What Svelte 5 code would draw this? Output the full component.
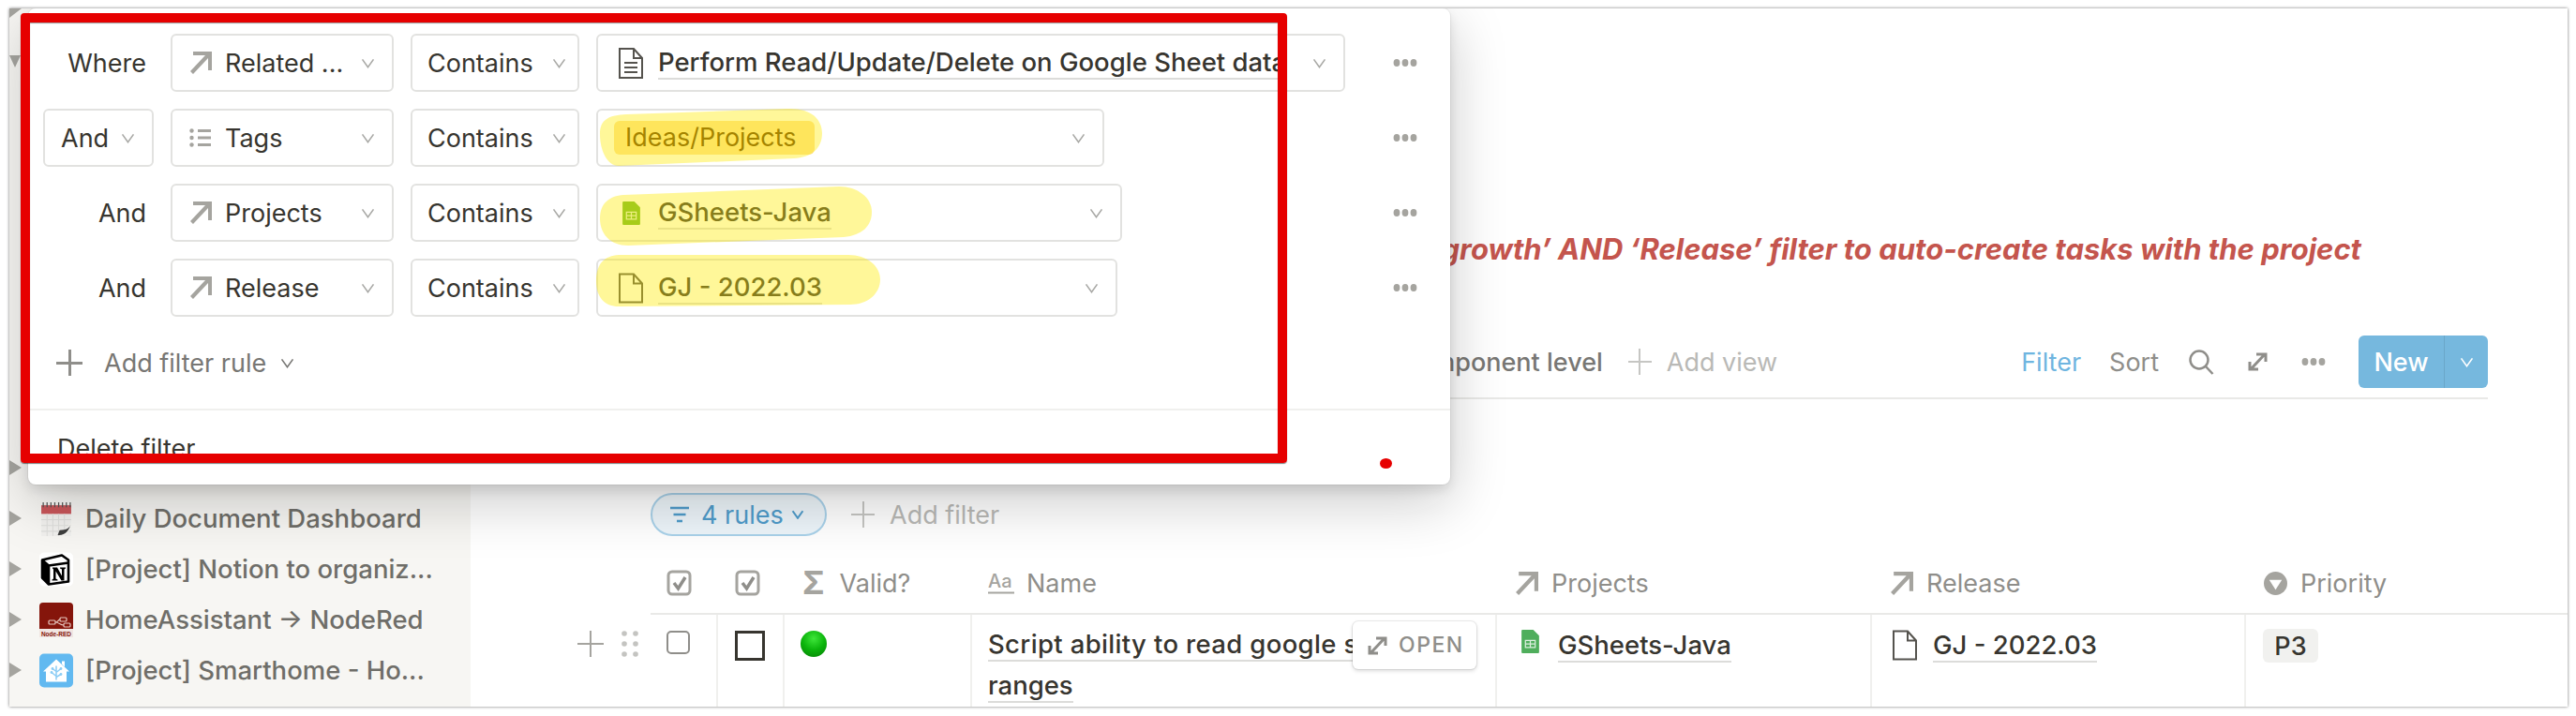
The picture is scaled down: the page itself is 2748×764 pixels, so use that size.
<script>
  const rules = [
    { conj: 'Where', prop: 'Related ...', icon: 'arrow', kind: 'page', value: 'Perform Read/Update/Delete on Google Sheet data', width: 799 },
    { conj: 'And', prop: 'Tags', icon: 'list', kind: 'tag', value: 'Ideas/Projects', width: 542, picker: true },
    { conj: 'And', prop: 'Projects', icon: 'arrow', kind: 'sheet', value: 'GSheets-Java', width: 561 },
    { conj: 'And', prop: 'Release', icon: 'arrow', kind: 'doc', value: 'GJ - 2022.03', width: 556 }
  ];

  const pages = [
    { name: '', icon: '' },
    { name: 'Daily Document Dashboard', icon: 'calendar' },
    { name: '[Project] Notion to organiz...', icon: 'notion' },
    { name: 'HomeAssistant → NodeRed', icon: 'nodered' },
    { name: '[Project] Smarthome - Ho...', icon: 'home' }
  ];
</script>

{#snippet chevron()}
  <svg class="chev" viewBox="0 0 16 12"><path d="M1.5 1.5 8 10.5 14.5 1.5" /></svg>
{/snippet}

{#snippet arrow()}
  <svg class="arrow" viewBox="0 0 24 24"><path d="M4 0h20v20h-4V7L4 24 1 21 17 4H4z" /></svg>
{/snippet}

{#snippet dots()}
  <svg class="dots" viewBox="0 0 26 10"><ellipse cx="4" cy="5" rx="3.400" ry="4" /><ellipse cx="13" cy="5" rx="3.400" ry="4" /><ellipse cx="22" cy="5" rx="3.400" ry="4" /></svg>
{/snippet}

{#snippet sheet()}
  <svg class="sheet" viewBox="0 0 18 24">
    <path d="M1 0h11l6 6v17a1 1 0 0 1-1 1H1a1 1 0 0 1-1-1V1a1 1 0 0 1 1-1z" fill="currentColor" />
    <path d="M4 11h10v7H4zM9 11v7M4 14.500h10" fill="none" stroke="#fff" stroke-width="1.200" opacity=".8" />
  </svg>
{/snippet}

{#snippet blankdoc()}
  <svg class="doc" viewBox="0 0 26 32"><path d="M1 1h15l9 10v20H1zM16 1v10h9" fill="none" stroke="currentColor" stroke-width="2" /></svg>
{/snippet}

{#snippet expand()}
  <svg class="expand" viewBox="0 0 21 20"><path d="M3 18 18 2M9 2h10v8M2 10v8h9" /></svg>
{/snippet}

<div class="screen">
  <div class="window">
    <aside class="sidebar">
      <div class="stubs">
        <span class="tri corner"></span>
        <span class="tri down"></span>
      </div>
      <ul class="pages">
        {#each pages as page}
          <li>
            <span class="tri"></span>
            <span class="pageicon">
              {#if page.icon === 'calendar'}
                <svg viewBox="0 0 33 36">
                  <rect x="1" y="3" width="31" height="33" fill="#f1f0ee" />
                  <rect x="1" y="4" width="31" height="9" fill="#c9565a" />
                  <path d="M3 1v5M7 1v5M11 1v5M15 1v5M19 1v5M23 1v5M27 1v5M31 1v5" stroke="#555" stroke-width="1.200" />
                  <path d="M1 19h31M1 25h31M1 31h31M7 13v23M13 13v23M19 13v23M25 13v23" stroke="#dededc" stroke-width="1" />
                  <path d="M32 22 20 36h5l7-8z" fill="#f7f6f3" />
                  <path d="M32 22c-1 6-5 8-12 8l-2 5c7 1 12-4 14-13z" fill="#3e3e3e" />
                </svg>
              {:else if page.icon === 'notion'}
                <svg viewBox="0 0 36 36">
                  <rect width="36" height="36" rx="5" fill="#fff" />
                  <path d="M3 8 24 3l7 5v23l-21 3-7-7z" fill="#fff" stroke="#000" stroke-width="2.600" stroke-linejoin="round" />
                  <path d="M3 8l7 6v20M10 14l21-3" fill="none" stroke="#000" stroke-width="2.600" />
                  <path d="M3 9l7 5v19l-7-6z" fill="#000" />
                  <path d="M14 16h5l5 9v-7l-2-1v-1h6v1l-1.500 1v12h-3l-6-10v8l2 1v1h-6v-1l1.500-1V18l-1-1z" fill="#000" />
                </svg>
              {:else if page.icon === 'nodered'}
                <svg viewBox="0 0 36 37">
                  <path d="M0 4a4 4 0 0 1 4-4h28a4 4 0 0 1 4 4v24H0z" fill="#85150b" />
                  <rect y="28" width="36" height="9" fill="#f1e6e2" />
                  <g fill="none" stroke="#e8c9c2" stroke-width="1.200">
                    <rect x="10" y="19" width="7" height="4" rx="1" />
                    <rect x="22" y="16" width="7" height="4" rx="1" />
                    <rect x="26" y="22" width="7" height="4" rx="1" />
                    <path d="M17 21c3 0 3-3 5-3M17 21c4 0 5 3 9 3" />
                  </g>
                  <text x="18" y="35.500" class="nrtext">Node-RED</text>
                </svg>
              {:else if page.icon === 'home'}
                <svg viewBox="0 0 36 36">
                  <rect width="36" height="36" rx="5" fill="#62b9f0" />
                  <path d="M18 6 32 19h-3v11H7V19H4zM24 8h3v6l-3-3z" fill="#fff" />
                  <path d="M18 28V13M18 24l-5-4M18 20l5-4M18 25l5-3M14 16l4 3" stroke="#8ccdf5" stroke-width="1.500" fill="none" />
                  <circle cx="13" cy="20" r="1.400" fill="#8ccdf5" /><circle cx="23" cy="16" r="1.400" fill="#8ccdf5" /><circle cx="23" cy="22" r="1.400" fill="#8ccdf5" /><circle cx="14" cy="16" r="1.400" fill="#8ccdf5" />
                </svg>
              {/if}
            </span>
            <span class="pagename">{page.name}</span>
          </li>
        {/each}
      </ul>
    </aside>

    <main class="main">
      <p class="note">‘growth’ AND ‘Release’ filter to auto-create tasks with the project</p>

      <div class="toolbar">
        <div class="views">
          <span class="view">Component level</span>
          <span class="addview"><span class="plus small"></span>Add view</span>
        </div>
        <div class="tools">
          <span class="filter">Filter</span>
          <span class="sort">Sort</span>
          <svg class="search" viewBox="0 0 28 28"><circle cx="12" cy="12" r="9.500" /><path d="M19 19l7.500 8" /></svg>
          <span class="toolexpand">{@render expand()}</span>
          <span class="tooldots">{@render dots()}</span>
          <div class="newbtn">
            <span class="newlabel">New</span>
            <span class="newchev">{@render chevron()}</span>
          </div>
        </div>
      </div>

      <div class="filterbar">
        <span class="pill">
          <svg viewBox="0 0 22 20"><path d="M1 3h20M4.500 10h13M8 17h6" /></svg>
          4 rules
          <svg class="pillchev" viewBox="0 0 16 12"><path d="M1.500 1.500 8 10.500 14.500 1.500" /></svg>
        </span>
        <span class="addfilter"><span class="plus small"></span>Add filter</span>
      </div>

      <div class="table">
        <div class="th"><svg class="hcheck" viewBox="0 0 27 28"><rect x="2" y="2" width="23" height="24" rx="4" /><path class="tick" d="M8 14l4.500 6L20 8" /></svg></div>
        <div class="th"><svg class="hcheck" viewBox="0 0 27 28"><rect x="2" y="2" width="23" height="24" rx="4" /><path class="tick" d="M8 14l4.500 6L20 8" /></svg></div>
        <div class="th valid"><span class="sigma">Σ</span>Valid?</div>
        <div class="th name">
          <svg class="aa" viewBox="0 0 28 24"><text x="0" y="17" class="aatext">Aa</text><path d="M0 22.500h28" /></svg>Name
        </div>
        <div class="th proj">{@render arrow()}Projects</div>
        <div class="th rel">{@render arrow()}Release</div>
        <div class="th prio">
          <svg class="prioicon" viewBox="0 0 26 26"><circle cx="13" cy="13" r="13" /><path d="M6 9h14l-7 11z" fill="#fff" /></svg>Priority
        </div>

        <div class="td first">
          <div class="handles">
            <span class="plus"></span>
            <svg class="grip" viewBox="0 0 18 28">
              {#each [3, 14, 25] as cy}
                <circle cx="3" {cy} r="2.800" /><circle cx="15" {cy} r="2.800" />
              {/each}
            </svg>
          </div>
          <span class="rowcheck"></span>
        </div>
        <div class="td second"><span class="blackbox"></span></div>
        <div class="td"><span class="greendot"></span></div>
        <div class="td namecell">
          <span class="link">Script ability to read google sheet</span><br /><span class="link">ranges</span>
          <span class="open">
            {@render expand()}
            OPEN
          </span>
        </div>
        <div class="td projcell"><span class="greensheet">{@render sheet()}</span><span class="link">GSheets-Java</span></div>
        <div class="td relcell">{@render blankdoc()}<span class="link">GJ - 2022.03</span></div>
        <div class="td priocell"><span class="p3">P3</span></div>
      </div>
    </main>

    <section class="popup">
      {#each rules as rule, i}
        <div class="rule">
          {#if i === 1}
            <div class="select conj"><span>And</span>{@render chevron()}</div>
          {:else}
            <div class="conjlabel">{rule.conj}</div>
          {/if}
          <div class="select prop">
            {#if rule.icon === 'arrow'}
              {@render arrow()}
            {:else}
              <svg class="listicon" viewBox="0 0 24 20"><path d="M9 2.500h14M9 10h14M9 17.500h14" /><circle cx="2.500" cy="2.500" r="2.200" /><circle cx="2.500" cy="10" r="2.200" /><circle cx="2.500" cy="17.500" r="2.200" /></svg>
            {/if}
            <span>{rule.prop}</span>
            {@render chevron()}
          </div>
          <div class="select op"><span>Contains</span>{@render chevron()}</div>
          <div class="select val" style:width="{rule.width}px">
            {#if rule.kind === 'tag'}
              <span class="tag">{rule.value}</span>
            {:else}
              <span class="valicon">
                {#if rule.kind === 'page'}
                  <svg class="doc" viewBox="0 0 26 33"><path d="M1 1h15l9 10v21H1zM16 1v10h9M6 16h14M6 21h14M6 26h14" fill="none" stroke="currentColor" stroke-width="2" /></svg>
                {:else if rule.kind === 'sheet'}
                  <span class="limegreen">{@render sheet()}</span>
                {:else}
                  {@render blankdoc()}
                {/if}
              </span>
              <span class="link clip">{rule.value}</span>
            {/if}
            {@render chevron()}
          </div>
          <div class="more">{@render dots()}</div>
        </div>
      {/each}

      <div class="addrule">
        <span class="plus"></span>
        <span>Add filter rule</span>
        {@render chevron()}
      </div>
      <div class="deletefilter">Delete filter</div>
    </section>

    <!-- marker strokes drawn over the screenshot -->
    <svg class="marker" viewBox="0 0 2729 745" aria-hidden="true">
      <path d="M630 134C630 118 640 114 658 113L830 107C855 106 867 118 867 133C867 150 855 159 837 160L650 168C638 168 630 152 630 134z" />
      <path d="M630 224C630 208 640 200 655 199L885 190C905 190 920 202 920 217C920 232 910 242 890 244L660 253C640 253 630 240 630 224z" />
      <path d="M626 291C626 272 635 264 650 263L895 263C915 263 929 275 929 289C929 305 915 316 897 316L650 318C635 318 626 308 626 291z" />
    </svg>
    <div class="redbox"></div>
    <span class="reddot"></span>
  </div>
</div>

<style>
  :global(body) {
    margin: 0;
    background: #fff;
  }

  .screen {
    width: 2748px;
    height: 764px;
    box-sizing: border-box;
    padding: 9px 9px 10px 10px;
    font-family: Inter, "Noto Sans", sans-serif;
    font-size: 27px;
    color: #37352f;
  }

  .window {
    position: relative;
    display: flex;
    height: 100%;
    overflow: hidden;
    background: #fff;
    box-shadow: 0 0 3px rgba(0, 0, 0, 0.55);
  }

  .sidebar {
    flex: 0 0 492px;
    display: flex;
    flex-direction: column;
    justify-content: space-between;
    background: #f7f6f3;
  }

  .stubs {
    display: flex;
    flex-direction: column;
    gap: 40px;
  }

  .tri {
    display: block;
    flex: none;
    width: 0;
    height: 0;
    border-style: solid;
    border-width: 8px 0 8px 13px;
    border-color: transparent transparent transparent #a5a49f;
  }

  .tri.corner {
    border-width: 10px 13px 0 0;
    border-color: #a5a49f transparent transparent transparent;
  }

  .tri.down {
    border-width: 13px 6px 0 6px;
    border-color: #a5a49f transparent transparent transparent;
  }

  .pages {
    list-style: none;
    margin: 0 0 12px;
    padding: 0;
  }

  .pages li {
    display: flex;
    align-items: center;
    height: 54px;
    font-size: 27.500px;
    font-weight: 500;
    color: #6f6e69;
    white-space: nowrap;
  }

  .pageicon {
    flex: none;
    width: 36px;
    height: 37px;
    margin: 0 13px 0 19px;
  }

  .pageicon svg {
    display: block;
    width: 36px;
    height: 37px;
  }

  .nrtext {
    font: 700 6.500px "Liberation Sans", sans-serif;
    fill: #85150b;
    text-anchor: middle;
  }

  .main {
    flex: 1;
    min-width: 0;
    box-sizing: border-box;
    padding: 237px 85px 0 192px;
    display: flex;
    flex-direction: column;
  }

  .note {
    margin: 0;
    height: 40px;
    line-height: 40px;
    padding-right: 135px;
    font-size: 31px;
    font-weight: 700;
    font-style: italic;
    color: #c4554d;
    text-align: right;
    white-space: nowrap;
    direction: rtl;
    unicode-bidi: plaintext;
  }

  .toolbar {
    display: flex;
    align-items: center;
    justify-content: space-between;
    margin-top: 64px;
    height: 76px;
    box-sizing: border-box;
    padding: 8px 0 10px;
    border-bottom: 2px solid #e9e9e7;
  }

  .views {
    flex: 1;
    display: flex;
    align-items: center;
    justify-content: flex-end;
    gap: 27px;
    padding-right: 260px;
    white-space: nowrap;
  }

  .view {
    font-weight: 500;
    color: #787774;
  }

  .addview,
  .addfilter {
    display: flex;
    align-items: center;
    gap: 16px;
    color: #b9b9b6;
  }

  .tools {
    display: flex;
    align-items: center;
    color: #8f8e8a;
  }

  .filter {
    color: #6fb5e0;
  }

  .sort {
    margin-left: 30px;
  }

  .search {
    width: 28px;
    height: 28px;
    margin-left: 31px;
    fill: none;
    stroke: #8f8e8a;
    stroke-width: 2.500;
  }

  .toolexpand {
    display: flex;
    margin-left: 36px;
  }

  .expand {
    flex: none;
    width: 21px;
    height: 20px;
    fill: none;
    stroke: #8f8e8a;
    stroke-width: 3;
  }

  .tooldots {
    display: flex;
    margin-left: 36px;
  }

  .newbtn {
    display: flex;
    align-items: stretch;
    height: 56px;
    width: 138px;
    margin-left: 35px;
    border-radius: 6px;
    background: #76b8de;
    color: #fff;
    font-weight: 500;
  }

  .newlabel {
    width: 91px;
    display: flex;
    align-items: center;
    justify-content: center;
    border-right: 1px solid #6aa6c9;
  }

  .newchev {
    flex: 1;
    display: flex;
    align-items: center;
    justify-content: center;
  }

  .newchev .chev {
    stroke: #fff;
  }

  .filterbar {
    display: flex;
    align-items: center;
    height: 46px;
    margin-top: 100px;
  }

  .pill {
    display: flex;
    align-items: center;
    gap: 12px;
    width: 188px;
    height: 46px;
    box-sizing: border-box;
    padding: 0 16px 0 18px;
    border: 2px solid #a9d2ea;
    border-radius: 24px;
    background: #edf5fa;
    color: #4f9ccb;
    white-space: nowrap;
  }

  .pill svg {
    flex: none;
    width: 22px;
    height: 20px;
    fill: none;
    stroke: #4f9ccb;
    stroke-width: 2.500;
  }

  .pill .pillchev {
    width: 14px;
    height: 10px;
    margin-left: -4px;
  }

  .addfilter {
    margin-left: 26px;
  }

  .table {
    display: grid;
    grid-template-columns: 72px 71px 200px 560px 400px 399px 1fr;
    grid-template-rows: 66px 98px;
    margin-top: 18px;
    margin-right: -85px;
  }

  .th {
    display: flex;
    align-items: center;
    border-bottom: 2px solid #e9e9e7;
    color: #8f8e8a;
    box-sizing: border-box;
  }

  .th:nth-child(1) {
    padding-left: 17px;
  }

  .th:nth-child(2) {
    padding-left: 18px;
  }

  .hcheck {
    width: 27px;
    height: 28px;
    fill: none;
    stroke: #a5a49f;
    stroke-width: 3;
  }

  .hcheck .tick {
    stroke: #8f8e8a;
    stroke-width: 3.500;
  }

  .valid {
    padding-left: 19px;
    gap: 16px;
  }

  .sigma {
    font-size: 34px;
    font-weight: 700;
    color: #a5a49f;
    line-height: 1;
  }

  .name {
    padding-left: 17px;
    gap: 13px;
  }

  .aa {
    width: 28px;
    height: 24px;
    stroke: #a5a49f;
    stroke-width: 2;
  }

  .aatext {
    font: 500 20px Inter, sans-serif;
    fill: #a5a49f;
    stroke: none;
  }

  .proj,
  .rel {
    padding-left: 19px;
    gap: 14px;
  }

  .prio {
    padding-left: 19px;
    gap: 14px;
  }

  .prioicon {
    width: 25px;
    height: 25px;
    fill: #a5a49f;
  }

  .td {
    position: relative;
    box-sizing: border-box;
    padding-top: 17px;
    border-right: 2px solid #f0f0ee;
  }

  .td:last-child {
    border-right: 0;
  }

  .first {
    padding-left: 17px;
  }

  .handles {
    position: absolute;
    left: -78px;
    top: 17px;
    display: flex;
    align-items: center;
    gap: 19px;
  }

  .grip {
    width: 18px;
    height: 28px;
    fill: #c4c4c1;
  }

  .rowcheck {
    display: block;
    width: 25px;
    height: 25px;
    box-sizing: border-box;
    border: 2px solid #8f8e8a;
    border-radius: 5px;
  }

  .second {
    padding-left: 18px;
  }

  .blackbox {
    display: block;
    width: 32px;
    height: 32px;
    box-sizing: border-box;
    border: 3px solid #37352f;
  }

  .greendot {
    display: block;
    width: 28px;
    height: 28px;
    margin-left: 17px;
    border-radius: 50%;
    background: radial-gradient(circle at 50% 30%, #3ee63a 0%, #0bb40b 50%, #067d06 100%);
  }

  .namecell {
    padding-left: 17px;
    padding-top: 10px;
    line-height: 44px;
    font-weight: 500;
    white-space: nowrap;
    overflow: hidden;
  }

  .link {
    border-bottom: 2px solid #dcdcda;
    font-size: 27.500px;
    font-weight: 500;
    line-height: 1.200;
    white-space: nowrap;
  }

  .namecell .link:first-child {
    letter-spacing: 0.350px;
  }

  .open {
    position: absolute;
    left: 406px;
    top: 7px;
    display: flex;
    align-items: center;
    gap: 12px;
    width: 132px;
    height: 51px;
    box-sizing: border-box;
    padding-left: 16px;
    border-radius: 6px;
    background: #fff;
    box-shadow: 0 0 0 1px rgba(15, 15, 15, 0.08), 0 2px 4px rgba(15, 15, 15, 0.15);
    font-size: 23px;
    letter-spacing: 1.500px;
    line-height: 1;
    font-weight: 500;
    color: #8f8e8a;
  }

  .projcell,
  .relcell {
    display: flex;
    align-items: flex-start;
    gap: 20px;
    padding-left: 26px;
    padding-top: 16px;
  }

  .relcell {
    padding-left: 22px;
    gap: 17px;
  }

  .greensheet {
    color: #4fae5c;
    display: flex;
  }

  .limegreen {
    color: #6db82a;
    display: flex;
  }

  .sheet {
    width: 19px;
    height: 25px;
  }

  .doc {
    width: 26px;
    height: 33px;
    color: #55534e;
  }

  .priocell {
    padding-left: 18px;
    padding-top: 15px;
  }

  .p3 {
    display: inline-flex;
    align-items: center;
    justify-content: center;
    width: 59px;
    height: 36px;
    border-radius: 6px;
    background: #f1f1ef;
    font-weight: 500;
  }

  .popup {
    position: absolute;
    left: 20px;
    top: 0;
    width: 1517px;
    height: 508px;
    box-sizing: border-box;
    padding-top: 27px;
    background: #fff;
    border-radius: 8px;
    box-shadow: 0 0 0 1px rgba(15, 15, 15, 0.05), 0 6px 12px rgba(15, 15, 15, 0.1), 0 18px 60px rgba(15, 15, 15, 0.22);
    display: flex;
    flex-direction: column;
    gap: 18px;
    overflow: hidden;
  }

  .rule {
    display: flex;
    align-items: center;
    gap: 18px;
    height: 62px;
    padding: 0 35px 0 16px;
  }

  .conjlabel {
    width: 110px;
    padding-right: 8px;
    text-align: right;
    font-weight: 400;
  }

  .select {
    display: flex;
    align-items: center;
    height: 62px;
    box-sizing: border-box;
    border: 2px solid #e2e2e0;
    border-radius: 6px;
    white-space: nowrap;
  }

  .select .chev {
    margin-left: auto;
  }

  .conj {
    width: 118px;
    padding: 0 18px 0 17px;
  }

  .prop {
    width: 238px;
    padding: 0 18px 0 18px;
    gap: 14px;
  }

  .op {
    width: 180px;
    padding: 0 12px 0 16px;
  }

  .val {
    padding: 0 18px 0 20px;
  }

  .chev {
    flex: none;
    width: 15px;
    height: 11px;
    fill: none;
    stroke: #a9a9a6;
    stroke-width: 1.800;
  }

  .arrow {
    flex: none;
    width: 24px;
    height: 24px;
    fill: #a5a49f;
  }

  .th .arrow {
    width: 25px;
    height: 25px;
  }

  .listicon {
    flex: none;
    width: 24px;
    height: 20px;
    fill: #a5a49f;
    stroke: #a5a49f;
    stroke-width: 3;
  }

  .listicon circle {
    stroke: none;
  }

  .valicon {
    flex: none;
    display: flex;
    justify-content: center;
    width: 30px;
    margin-right: 14px;
  }

  .clip {
    max-width: 700px;
    overflow: hidden;
    line-height: 1.200;
  }

  .tag {
    margin-left: -3px;
    padding: 0 19px 0 12px;
    height: 36px;
    line-height: 36px;
    border-radius: 6px;
    background: #fde29a;
    color: #6a4000;
  }

  .more {
    margin-left: auto;
    display: flex;
  }

  .dots {
    display: block;
    width: 26px;
    height: 10px;
    fill: #a5a49f;
  }

  .addrule {
    display: flex;
    align-items: center;
    height: 62px;
    padding-left: 30px;
    gap: 23px;
    color: #787774;
    font-weight: 400;
  }

  .addrule .plus {
    background:
      linear-gradient(#8f8e8a, #8f8e8a) center / 100% 3px no-repeat,
      linear-gradient(#8f8e8a, #8f8e8a) center / 3px 100% no-repeat;
  }

  .addrule .chev {
    margin-left: -8px;
    stroke: #787774;
  }

  .plus {
    position: relative;
    display: block;
    flex: none;
    width: 28px;
    height: 28px;
    background:
      linear-gradient(#a5a49f, #a5a49f) center / 100% 2px no-repeat,
      linear-gradient(#a5a49f, #a5a49f) center / 2px 100% no-repeat;
  }

  .plus.small {
    width: 25px;
    height: 28px;
    background:
      linear-gradient(#c6c6c3, #c6c6c3) center / 100% 2px no-repeat,
      linear-gradient(#c6c6c3, #c6c6c3) center / 2px 100% no-repeat;
  }

  .deletefilter {
    border-top: 2px solid #f0f0ee;
    padding: 24px 0 0 31px;
  }

  .marker {
    position: absolute;
    left: 0;
    top: 0;
    width: 2729px;
    height: 745px;
    pointer-events: none;
    fill: rgba(255, 235, 0, 0.4);
  }

  .redbox {
    position: absolute;
    left: 12px;
    top: 5px;
    width: 1351px;
    height: 480px;
    box-sizing: border-box;
    border: 10px solid #e60000;
    border-radius: 4px;
    box-shadow: 0 1px 1px rgba(0, 0, 0, 0.5), inset 0 1px 1px rgba(0, 0, 0, 0.4);
  }

  .reddot {
    position: absolute;
    left: 1462px;
    top: 480px;
    width: 13px;
    height: 11px;
    border-radius: 50%;
    background: #e60000;
  }
</style>
